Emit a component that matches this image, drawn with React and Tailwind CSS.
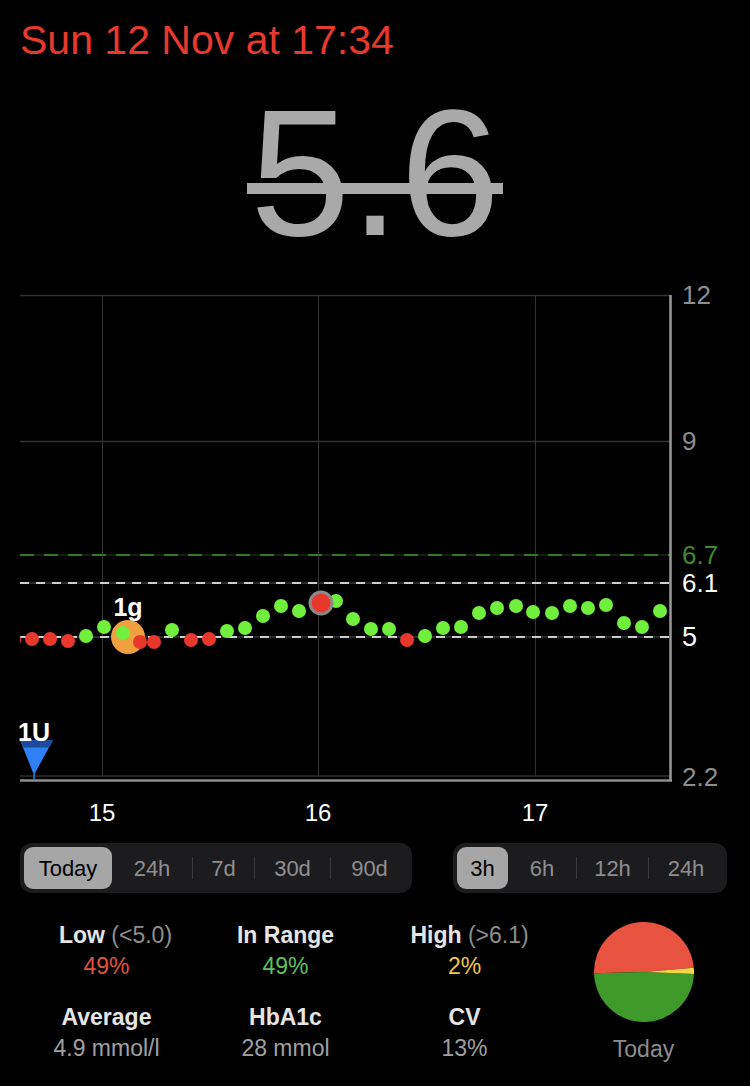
const G = "#70ef3c";
const R = "#e8382b";

const dots = [
  [14, 640, R], [32, 639, R], [50, 639, R], [68, 641, R],
  [86, 636, G], [104, 627, G],
  [123, 633, G], [140, 642, R], [154, 642, R],
  [172, 630, G], [191, 640, R], [209, 639, R],
  [227, 631, G], [245, 628, G], [263, 616, G], [281, 606, G], [299, 611, G],
  [336, 601, G],
  [353, 619, G], [371, 629, G], [389, 629, G], [407, 640, R],
  [425, 636, G], [443, 628, G], [461, 627, G], [479, 613, G], [497, 608, G],
  [516, 606, G], [533, 612, G], [552, 613, G], [570, 606, G], [588, 608, G],
  [606, 605, G], [624, 623, G], [642, 627, G], [660, 611, G],
];

const FONT = "Liberation Sans, Arial, sans-serif";

function Chart() {
  return (
    <svg className="block mt-[17px]" width="750" height="550" viewBox="0 280 750 550">
      <defs>
        <clipPath id="plot">
          <rect x="20" y="290" width="650" height="490" />
        </clipPath>
      </defs>
      <line x1="20" y1="295.5" x2="670" y2="295.5" stroke="#333" strokeWidth="1.5" />
      <line x1="20" y1="441.5" x2="670" y2="441.5" stroke="#333" strokeWidth="1.5" />
      <line x1="102.5" y1="295" x2="102.5" y2="776" stroke="#333" strokeWidth="1" />
      <line x1="318.5" y1="295" x2="318.5" y2="776" stroke="#333" strokeWidth="1" />
      <line x1="535.5" y1="295" x2="535.5" y2="776" stroke="#333" strokeWidth="1" />
      <line x1="20" y1="555" x2="670" y2="555" stroke="#333" strokeWidth="1" />
      <line x1="20" y1="555" x2="670" y2="555" stroke="#2f7a25" strokeWidth="2" strokeDasharray="14 10" />
      <line x1="20" y1="583" x2="670" y2="583" stroke="#3a3a3a" strokeWidth="1.5" />
      <line x1="20" y1="583" x2="670" y2="583" stroke="#cfcfcf" strokeWidth="2" strokeDasharray="9 7" />
      <line x1="20" y1="637" x2="670" y2="637" stroke="#3a3a3a" strokeWidth="1.5" />
      <line x1="20" y1="637" x2="670" y2="637" stroke="#cfcfcf" strokeWidth="2" strokeDasharray="9 7" />
      <line x1="20" y1="776" x2="670" y2="776" stroke="#444" strokeWidth="1" />
      <line x1="20" y1="780.5" x2="672" y2="780.5" stroke="#8e8e8e" strokeWidth="2.5" />
      <line x1="670.5" y1="295" x2="670.5" y2="781" stroke="#9a9a9a" strokeWidth="2.5" />

      <g clipPath="url(#plot)">
        <circle cx="128" cy="637" r="17" fill="#f0a03e" />
        {dots.map(([x, y, c], i) => (
          <circle key={i} cx={x} cy={y} r="7" fill={c} />
        ))}
        <circle cx="321" cy="603" r="11" fill={R} stroke="#8a8a8a" strokeWidth="3" />
        <polygon points="20,740 53,740 34,775" fill="#2f7ff5" />
        <polygon points="20,740 53,740 49.3,747.5 23.6,747.5" fill="#1d4a9a" />
        <line x1="34" y1="774" x2="34" y2="780" stroke="#2f7ff5" strokeWidth="1.5" />
      </g>

      <text x="128" y="616" textAnchor="middle" fontFamily={FONT} fontWeight="700" fontSize="25" fill="#fff">1g</text>
      <text x="34" y="741" textAnchor="middle" fontFamily={FONT} fontWeight="700" fontSize="25" fill="#fff">1U</text>

      <text x="682" y="304" fontFamily={FONT} fontSize="26" fill="#8e8e8e">12</text>
      <text x="682" y="450" fontFamily={FONT} fontSize="26" fill="#8e8e8e">9</text>
      <text x="682" y="564" fontFamily={FONT} fontSize="26" fill="#3e8a2e">6.7</text>
      <text x="682" y="592" fontFamily={FONT} fontSize="26" fill="#ffffff">6.1</text>
      <text x="682" y="646" fontFamily={FONT} fontSize="27" fill="#ffffff">5</text>
      <text x="682" y="786" fontFamily={FONT} fontSize="26" fill="#8e8e8e">2.2</text>

      <text x="102" y="821" textAnchor="middle" fontFamily={FONT} fontSize="24" fill="#fff">15</text>
      <text x="318" y="821" textAnchor="middle" fontFamily={FONT} fontSize="24" fill="#fff">16</text>
      <text x="535" y="821" textAnchor="middle" fontFamily={FONT} fontSize="24" fill="#fff">17</text>
    </svg>
  );
}

function Pie() {
  return (
    <svg width="100" height="100" viewBox="0 0 100 100" className="block mt-[2px]">
      <path d="M50,50 L0.015,51.22 A50,50 0 0 1 99.81,45.64 Z" fill="#e8533f" />
      <path d="M50,50 L99.96,51.92 A50,50 0 0 1 0.015,51.22 Z" fill="#3f9a2b" />
      <path d="M50,50 L99.81,45.64 A50,50 0 0 1 99.96,51.92 Z" fill="#f2d34a" />
    </svg>
  );
}

export default function App() {
  return (
    <div className="w-[750px] h-[1086px] bg-black overflow-hidden font-['Liberation_Sans',Arial,sans-serif]">
      <div className="pl-[20px] pt-[20px] text-[41px] leading-none text-[#e8392d]">Sun 12 Nov at 17:34</div>

      <div className="mt-[22px] flex justify-center">
        <div className="relative text-[180px] leading-none text-[#a9a9a9]">
          5.6
          <div className="absolute -left-[3px] -right-[3px] top-[100px] h-[11px] bg-[#a9a9a9]" />
        </div>
      </div>

      <Chart />

      <div className="mt-[13px] flex justify-between pl-[20px] pr-[23px] text-[22px] text-[#8e8e8e]">
        <div className="flex items-center h-[50px] w-[392px] p-[4px] rounded-[12px] bg-[#1c1c1e]">
          <div className="w-[88px] h-[42px] rounded-[9px] bg-[#a6a6a6] flex items-center justify-center text-black">Today</div>
          <div className="w-[80px] text-center">24h</div>
          <div className="w-px h-[22px] bg-[#3a3a3c]" />
          <div className="w-[61px] text-center">7d</div>
          <div className="w-px h-[22px] bg-[#3a3a3c]" />
          <div className="w-[75px] text-center">30d</div>
          <div className="w-px h-[22px] bg-[#3a3a3c]" />
          <div className="w-[77px] text-center">90d</div>
        </div>
        <div className="flex items-center h-[50px] w-[274px] p-[4px] rounded-[12px] bg-[#1c1c1e]">
          <div className="w-[51px] h-[42px] rounded-[9px] bg-[#a6a6a6] flex items-center justify-center text-black">3h</div>
          <div className="w-[68px] text-center">6h</div>
          <div className="w-px h-[22px] bg-[#3a3a3c]" />
          <div className="w-[71px] text-center">12h</div>
          <div className="w-px h-[22px] bg-[#3a3a3c]" />
          <div className="w-[74px] text-center">24h</div>
        </div>
      </div>

      <div className="mt-[27px] grid grid-cols-4 px-[17px] text-[23px] leading-[31px] text-center">
        <div>
          <div className="pl-[18px] whitespace-nowrap">
            <span className="font-bold text-[#e5e5e5]">Low</span> <span className="text-[#8e8e8e]">(&lt;5.0)</span>
          </div>
          <div className="text-[#e0533f]">49%</div>
          <div className="mt-[20px] font-bold text-[#e5e5e5]">Average</div>
          <div className="text-[#a0a0a0]">4.9 mmol/l</div>
        </div>
        <div>
          <div className="font-bold text-[#e5e5e5]">In Range</div>
          <div className="text-[#5fc15a]">49%</div>
          <div className="mt-[20px] font-bold text-[#e5e5e5]">HbA1c</div>
          <div className="text-[#a0a0a0]">28 mmol</div>
        </div>
        <div>
          <div className="pl-[10px] whitespace-nowrap">
            <span className="font-bold text-[#e5e5e5]">High</span> <span className="text-[#8e8e8e]">(&gt;6.1)</span>
          </div>
          <div className="text-[#f3c746]">2%</div>
          <div className="mt-[20px] font-bold text-[#e5e5e5]">CV</div>
          <div className="text-[#a0a0a0]">13%</div>
        </div>
        <div className="flex flex-col items-center">
          <Pie />
          <div className="mt-[12px] text-[#8e8e8e]">Today</div>
        </div>
      </div>
    </div>
  );
}
